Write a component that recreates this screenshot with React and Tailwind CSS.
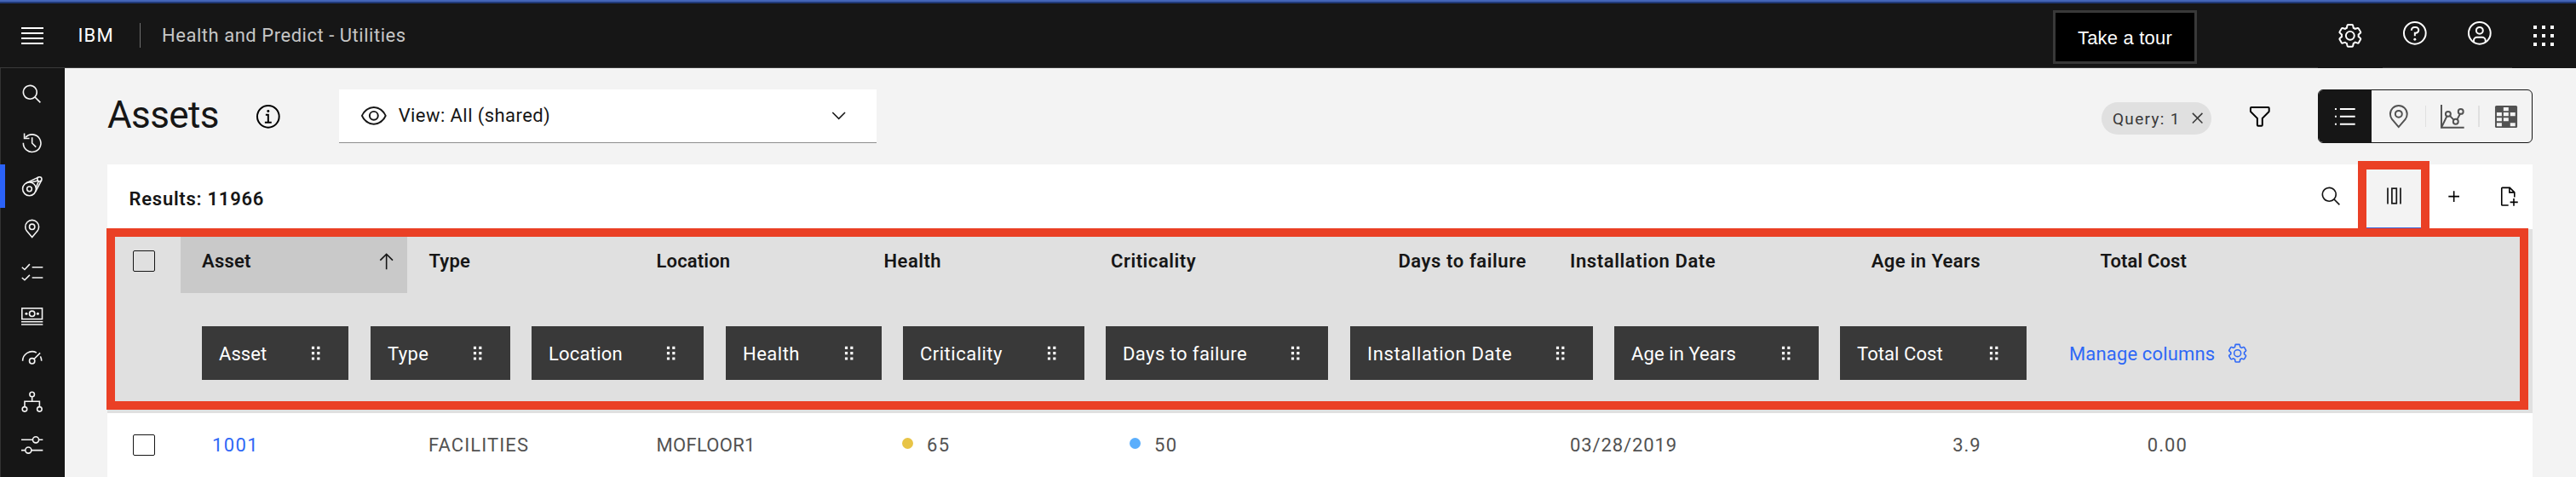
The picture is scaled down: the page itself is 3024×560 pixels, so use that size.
import React from "react";

const GEAR =
  "M27,16.76c0-.25,0-.5,0-.76s0-.51,0-.77l1.92-1.68A2,2,0,0,0,29.3,11L26.94,7a2,2,0,0,0-1.73-1,2,2,0,0,0-.64.1l-2.43.82a11.35,11.35,0,0,0-1.31-.75l-.51-2.52a2,2,0,0,0-2-1.61H13.64a2,2,0,0,0-2,1.61l-.51,2.52a11.48,11.48,0,0,0-1.32.75L7.43,6.06A2,2,0,0,0,6.79,6,2,2,0,0,0,5.06,7L2.7,11a2,2,0,0,0,.41,2.51L5,15.24c0,.25,0,.5,0,.76s0,.51,0,.77L3.11,18.45A2,2,0,0,0,2.7,21L5.06,25a2,2,0,0,0,1.73,1,2,2,0,0,0,.64-.1l2.43-.82a11.35,11.35,0,0,0,1.31.75l.51,2.52a2,2,0,0,0,2,1.61h4.72a2,2,0,0,0,2-1.61l.51-2.52a11.48,11.48,0,0,0,1.32-.75l2.42.82a2,2,0,0,0,.64.1,2,2,0,0,0,1.73-1L29.3,21a2,2,0,0,0-.41-2.51ZM25.21,24l-3.43-1.16a8.86,8.86,0,0,1-2.71,1.57L18.36,28H13.64l-.71-3.55a9.36,9.36,0,0,1-2.7-1.57L6.79,24,4.43,20l2.72-2.4a8.9,8.9,0,0,1,0-3.13L4.43,12,6.79,8l3.43,1.16a8.86,8.86,0,0,1,2.71-1.57L13.64,4h4.72l.71,3.55a9.36,9.36,0,0,1,2.7,1.57L25.21,8,27.57,12l-2.72,2.4a8.9,8.9,0,0,1,0,3.13L27.57,20ZM16,22a6,6,0,1,1,6-6A5.94,5.94,0,0,1,16,22Zm0-10a3.91,3.91,0,0,0-4,4,3.91,3.91,0,0,0,4,4,3.91,3.91,0,0,0,4-4A3.91,3.91,0,0,0,16,12Z";
const SEARCH =
  "M29,27.5859l-7.5521-7.5521a11.0177,11.0177,0,1,0-1.4141,1.4141L27.5859,29ZM4,13a9,9,0,1,1,9,9A9.01,9.01,0,0,1,4,13Z";

/* 32-unit icon frames: small is 25.33px, large is 31.67px */
function Solid({ d, className = "size-[25.33px]", children }) {
  return (
    <svg viewBox="0 0 32 32" fill="currentColor" className={`block shrink-0 ${className}`}>
      {d && <path d={d} />}
      {children}
    </svg>
  );
}
function Line({ className = "size-[25.33px]", children }) {
  return (
    <svg viewBox="0 0 32 32" fill="none" stroke="currentColor" strokeWidth="2" className={`block shrink-0 ${className}`}>
      {children}
    </svg>
  );
}

const Pin = ({ className }) => (
  <Line className={className}>
    <path d="M16 28.4 L8 19 C6.6 17.3 6 15 6 13 A10 10 0 0 1 26 13 C26 15 25.4 17.3 24 19 Z" />
    <circle cx="16" cy="13" r="4" />
  </Line>
);

const sideIcons = [
  <Line key="history">
    <path d="M6 8.3 A13 13 0 1 1 3 16" />
    <path d="M4.5 2 V9.5 H12" />
    <path d="M16 8 V16.4 L21.8 22.2" />
  </Line>,
  <Line key="engine">
    <circle cx="12" cy="20" r="10" />
    <circle cx="12" cy="20" r="3.6" />
    <circle cx="27" cy="5.5" r="3.3" />
    <path d="M7 11.4 L25.2 2.7 M21.2 23.8 L30 7.2 M14 10.2 L24.4 7.8 M21.8 18 L25.6 8.6" />
  </Line>,
  <Pin key="pin" />,
  <Line key="tasks">
    <path d="M16 8.5 H32 M16 24 H32 M1 8.5 L5 12 L12.5 4 M1 24 L5 27.5 L12.5 20" />
  </Line>,
  <Line key="money">
    <rect x="1" y="5" width="30" height="16" />
    <circle cx="16" cy="13" r="4" />
    <circle cx="7.5" cy="13" r="1.9" fill="currentColor" stroke="none" />
    <circle cx="24.5" cy="13" r="1.9" fill="currentColor" stroke="none" />
    <path d="M0 25 H32 M0 29 H32" />
  </Line>,
  <Line key="meter">
    <path d="M2 20 A14 14 0 0 1 22.5 7.6 M28.3 13 A14 14 0 0 1 30 20 M18.6 17.4 L28 8" />
    <circle cx="16" cy="20" r="4" />
  </Line>,
  <Line key="tree">
    <circle cx="16" cy="5" r="3.5" />
    <circle cx="5" cy="27" r="3.5" />
    <circle cx="27" cy="27" r="3.5" />
    <path d="M16 8.5 V15.5 M5 23.5 V15.5 H27 V23.5" />
  </Line>,
  <Line key="sliders">
    <path d="M0 8 H17 M26 8 H32 M0 23.5 H6 M15 23.5 H32" />
    <circle cx="21.5" cy="8" r="4.5" />
    <circle cx="10.5" cy="23.5" r="4.5" />
  </Line>,
];

function Header() {
  return (
    <header className="flex h-20 w-full shrink-0 flex-col bg-[#161616] text-white">
      <div className="h-[2px] bg-[#4465b8]" />
      <div className="h-[2px] bg-[#213a78]" />
      <div className="flex h-[76px] w-full">
        <div className="flex w-[2721px] border-b border-[#393939]">
          <div className="flex w-[76px] justify-center pt-7">
            <svg viewBox="0 0 26 20" className="block h-5 w-[26px]" fill="currentColor">
              <path d="M0 0h26v2H0zM0 6h26v2H0zM0 12h26v2H0zM0 18h26v2H0z" />
            </svg>
          </div>
          <div className="w-[88px] pl-[15.5px] pt-[22px] text-[22px] leading-[31px] tracking-[1.1px]">IBM</div>
          <div className="mt-[23px] h-[29px] w-px bg-[#6f6f6f]" />
          <div className="w-[2245px] pl-[25px] pt-[22px] text-[22px] leading-[31px] tracking-[0.53px] text-[#c6c6c6]">
            Health and Predict - Utilities
          </div>
          <button className="mt-2 flex h-[63px] w-[169px] items-center justify-center border-[3px] border-[#393939] bg-black pt-[2px] font-['Liberation_Sans',sans-serif] text-[22px] leading-6 tracking-[0.2px]">
            Take a tour
          </button>
        </div>
        <div className="flex w-[76px] justify-center pt-[22px]">
          <Solid d={GEAR} className="size-[31.67px]" />
        </div>
        <div className="flex w-[76px] justify-center border-b border-[#393939] pt-[19px]">
          <Line className="size-[31.67px]">
            <circle cx="16" cy="16" r="13" />
            <path fill="currentColor" stroke="none" d="M17,8H15.5A4.49,4.49,0,0,0,11,12.5V13h2v-.5A2.5,2.5,0,0,1,15.5,10H17a2.5,2.5,0,0,1,0,5H15v4.5h2V17a4.5,4.5,0,0,0,0-9Z" />
            <circle cx="16" cy="23.5" r="1.5" fill="currentColor" stroke="none" />
          </Line>
        </div>
        <div className="flex w-[76px] justify-center border-b border-[#393939] pt-[19px]">
          <Line className="size-[31.67px]">
            <circle cx="16" cy="16" r="13" />
            <circle cx="16" cy="13" r="4" />
            <path d="M9 26.5 V25 A4 4 0 0 1 13 21 H19 A4 4 0 0 1 23 25 V26.5" />
          </Line>
        </div>
        <div className="flex w-[75px] justify-center pr-px pt-[22px]">
          <Solid className="size-8" d="M4 4h4v4h-4zM14 4h4v4h-4zM24 4h4v4h-4zM4 14h4v4h-4zM14 14h4v4h-4zM24 14h4v4h-4zM4 24h4v4h-4zM14 24h4v4h-4zM24 24h4v4h-4z" />
        </div>
      </div>
    </header>
  );
}

function Sidebar() {
  return (
    <nav className="flex w-[76px] shrink-0 flex-col border-l border-[#333333] bg-[#161616] text-[#f4f4f4]">
      <div className="flex h-[62.3px] shrink-0 items-center justify-center pr-px">
        <Solid d={SEARCH} />
      </div>
      {sideIcons.map((icon, i) => (
        <div
          key={i}
          className={
            "relative flex h-[50.67px] shrink-0 items-center justify-center pr-px " +
            (i === 1 ? "before:absolute before:-left-px before:top-0 before:h-[51px] before:w-[6px] before:bg-[#2b62f7]" : "")
          }
        >
          {icon}
        </div>
      ))}
    </nav>
  );
}

function TitleBar() {
  return (
    <div className="flex h-[113px] w-full pl-[50px]">
      <h1 className="w-[173px] pt-[25px] text-[44px] leading-[60px] tracking-[-0.6px]">Assets</h1>
      <div className="w-[99px] pt-[41px]">
        <Line className="size-[31.67px] text-black">
          <circle cx="16" cy="16" r="13" />
          <path fill="currentColor" stroke="none" d="M17 22V13H13V15H15V22H12V24H20V22Z" />
          <circle cx="16" cy="9.5" r="1.5" fill="currentColor" stroke="none" />
        </Line>
      </div>
      <div className="mt-[25px] flex h-[63px] w-[631px] items-center border-b border-[#8d8d8d] bg-white pl-[25px] pr-8">
        <Solid
          className="size-[31.67px]"
          d="M30.94,15.66A16.69,16.69,0,0,0,16,5,16.69,16.69,0,0,0,1.06,15.66a1,1,0,0,0,0,.68A16.69,16.69,0,0,0,16,27,16.69,16.69,0,0,0,30.94,16.34,1,1,0,0,0,30.94,15.66ZM16,25c-5.3,0-10.9-3.93-12.93-9C5.1,10.93,10.7,7,16,7s10.9,3.93,12.93,9C26.9,21.07,21.3,25,16,25ZM16,10a6,6,0,1,0,6,6A6,6,0,0,0,16,10Zm0,10a4,4,0,1,1,4-4A4,4,0,0,1,16,20Z"
        />
        <span className="grow pl-[13px] text-[22px] leading-7 tracking-[0.43px]">View: All (shared)</span>
        <Solid d="M16 22L6 12 7.4 10.6 16 19.2 24.6 10.6 26 12Z" />
      </div>
      <div className="ml-[1438px] mt-10 flex h-[38px] w-[129px] items-center justify-between rounded-full bg-[#e0e0e0] pl-[13px] pr-1 text-[#393939]">
        <span className="pt-px text-[19px] leading-6 tracking-[1.3px]">Query: 1</span>
        <Solid d="M24 9.4L22.6 8 16 14.6 9.4 8 8 9.4 14.6 16 8 22.6 9.4 24 16 17.4 22.6 24 24 22.6 17.4 16 24 9.4Z" />
      </div>
      <div className="ml-[41px] w-[84px] pt-[41px] text-black">
        <Solid
          className="size-[31.67px]"
          d="M18,28H14a2,2,0,0,1-2-2V18.41L4.59,11A2,2,0,0,1,4,9.59V6A2,2,0,0,1,6,4H26a2,2,0,0,1,2,2V9.59A2,2,0,0,1,27.41,11L20,18.41V26A2,2,0,0,1,18,28ZM6,6V9.59l8,8V26h4V17.59l8-8V6Z"
        />
      </div>
      <div className="mt-[25px] flex h-[63px] w-[252px] overflow-hidden rounded-md border border-[#161616] text-[#525252]">
        <div className="flex w-[62px] items-center justify-center bg-[#161616] text-white">
          <Solid className="size-[31.67px]" d="M10 6h18v2H10zM10 15h18v2H10zM10 24h18v2H10zM4 6h2v2H4zM4 15h2v2H4zM4 24h2v2H4z" />
        </div>
        <div className="flex w-[63px] items-center justify-center pl-px">
          <Pin className="size-[31.67px]" />
        </div>
        <div className="h-[25px] w-[2px] self-center bg-[#e0e0e0]" />
        <div className="flex w-[61px] items-center justify-center">
          <Line className="size-[31.67px]">
            <path d="M3 2 V29 H30 M3.6 28 L9.6 15.4 M13 15 L18.3 20.6 M21.6 19.6 L25.2 12.8" />
            <circle cx="11" cy="13" r="3" />
            <circle cx="20" cy="22" r="3" />
            <circle cx="26" cy="10" r="3" />
          </Line>
        </div>
        <div className="h-[25px] w-[2px] self-center bg-[#e0e0e0]" />
        <div className="flex w-[61px] items-center justify-center">
          <Solid className="size-[31.67px]">
            <rect x="3" y="3" width="26.4" height="26.4" rx="1.6" />
            <path fill="#f4f4f4" d="M13 5h6v4.4h-6zM5 11.2h6v4.2H5zM13 11.2h6v4.2h-6zM21 11.2h6v4.2h-6zM5 17.4h6v4.2H5zM13 17.4h6v4.2h-6zM5 23.4h6v4.2H5zM21 23.4h6v4.2h-6z" />
          </Solid>
        </div>
      </div>
    </div>
  );
}

function Toolbar() {
  return (
    <div className="flex h-[76px] w-full bg-white">
      <div className="w-[2586px] pl-[25.5px] pt-[25px] text-[22px] font-semibold leading-[31px] tracking-[0.75px]">Results: 11966</div>
      <div className="mr-[14px] flex w-[50px] items-center justify-center">
        <Solid d={SEARCH} />
      </div>
      <div className="flex w-[68px] items-center justify-center border-b-2 border-[#3a62d8] bg-[#f3f3f3] pl-px">
        <svg viewBox="0 0 17 20" className="block h-5 w-[17px]" fill="none" stroke="currentColor" strokeWidth="1.7">
          <path d="M1 0.5V19.5M16 0.5V19.5" />
          <rect x="5.9" y="1.2" width="5.4" height="17.6" />
        </svg>
      </div>
      <div className="flex w-[73px] items-center justify-center pb-px text-black">
        <Solid d="M17 15L17 8 15 8 15 15 8 15 8 17 15 17 15 24 17 24 17 17 24 17 24 15Z" />
      </div>
      <div className="flex w-14 items-center justify-center text-black">
        <Line>
          <path d="M16 29 H7 A1 1 0 0 1 6 28 V4 A1 1 0 0 1 7 3 H18 L25 10 V17 M17.5 3 V10 H25 M24 19 V30 M18.5 24.5 H30" />
        </Line>
      </div>
    </div>
  );
}

const GRID = "grid grid-cols-[86px_266px_267px_267px_266px_267px_267px_266px_267px_267px_361px]";

function Checkbox() {
  return <div className="ml-[30px] h-[25px] w-[26px] rounded-xs border-[1.5px] border-[#161616]" />;
}

const chips = [
  ["Asset", "w-[172px] tracking-[0.07px]"],
  ["Type", "w-[164px] ml-[26px] tracking-[0.4px]"],
  ["Location", "w-[202px] ml-[25px] tracking-[0.22px]"],
  ["Health", "w-[183px] ml-[26px] tracking-[0.5px]"],
  ["Criticality", "w-[213px] ml-[25px] tracking-[0.5px]"],
  ["Days to failure", "w-[261px] ml-[25px] tracking-[0.42px]"],
  ["Installation Date", "w-[285px] ml-[26px] tracking-[0.65px]"],
  ["Age in Years", "w-[240px] ml-[25px] tracking-[0.1px]"],
  ["Total Cost", "w-[219px] ml-[25px] tracking-[0.08px]"],
];

function Table() {
  return (
    <div className="w-full text-[22px] leading-[30px]">
      <div className="h-[216px] bg-[#e0e0e0]">
        <div className={GRID + " h-[75px] items-center font-semibold"}>
          <div className="pb-px">
            <Checkbox />
          </div>
          <div className="flex h-[75px] items-center justify-between bg-[#c9c9c9] pl-[25px] pr-[11.5px] tracking-[0.2px]">
            <span className="pt-px">Asset</span>
            <Solid d="M16 4L6 14 7.41 15.41 15 7.83 15 28 17 28 17 7.83 24.59 15.41 26 14 16 4Z" />
          </div>
          <div className="pl-[25.5px] pt-px tracking-[0.17px]">Type</div>
          <div className="pl-[25.5px] pt-px tracking-[0.16px]">Location</div>
          <div className="pl-[25.5px] pt-px tracking-[0.5px]">Health</div>
          <div className="pl-[26px] pt-px tracking-[0.55px]">Criticality</div>
          <div className="pr-[20px] pt-px text-right tracking-[0.6px]">Days to failure</div>
          <div className="pl-[31px] pt-px tracking-[0.6px]">Installation Date</div>
          <div className="pr-[20px] pt-px text-right tracking-[0.38px]">Age in Years</div>
          <div className="pr-[45px] pt-px text-right tracking-[0.13px]">Total Cost</div>
          <div />
        </div>
        <div className="flex pl-[111px] pt-[39px]">
          {chips.map(([label, cls]) => (
            <div key={label} className={"flex h-[63px] shrink-0 items-center justify-between bg-[#393939] pl-[20px] pr-[25.5px] text-white " + cls}>
              <span className="pt-[3px]">{label}</span>
              <Solid d="M10 6h4v4h-4zM18 6h4v4h-4zM10 14h4v4h-4zM18 14h4v4h-4zM10 22h4v4h-4zM18 22h4v4h-4z" />
            </div>
          ))}
          <div className="flex h-[63px] items-center pl-[50px] text-[#2f68f6]">
            <span className="w-[184.5px] pt-[3px] tracking-[0.15px]">Manage columns</span>
            <Solid d={GEAR} />
          </div>
        </div>
      </div>
      <div className={GRID + " h-[75px] items-center bg-white text-[#525252]"}>
        <Checkbox />
        <div className="pl-[37px] tracking-[1.4px] text-[#2f68f6]">1001</div>
        <div className="pl-[25px] tracking-[1.1px]">FACILITIES</div>
        <div className="pl-[25.5px] tracking-[0.3px]">MOFLOOR1</div>
        <div className="flex items-center pl-[47px] tracking-[1.4px]">
          <span className="mb-[5px] mr-4 size-[13px] rounded-full bg-[#e8c446]" />65
        </div>
        <div className="flex items-center pl-[48px] tracking-[1.4px]">
          <span className="mb-[5px] mr-4 size-[13px] rounded-full bg-[#5aaefc]" />50
        </div>
        <div />
        <div className="pl-[31px] tracking-[0.9px]">03/28/2019</div>
        <div className="pr-[19.5px] text-right tracking-[0.9px]">3.9</div>
        <div className="pr-[44px] text-right tracking-[1.1px]">0.00</div>
        <div />
      </div>
    </div>
  );
}

export default function App() {
  return (
    <div className="relative flex h-[560px] w-[3024px] flex-col overflow-hidden bg-[#f3f3f3] font-['Roboto','Noto_Sans',sans-serif] text-[#161616]">
      <Header />
      <div className="flex h-[480px] w-full">
        <Sidebar />
        <main className="flex w-[2948px] flex-col">
          <TitleBar />
          <div className="ml-[50px] w-[2847px]">
            <Toolbar />
            <Table />
          </div>
        </main>
      </div>
      {/* callout frames drawn over the page */}
      <div className="absolute left-[2768px] top-[189px] h-[89px] w-[84px] border-[10px] border-[#ea4025]" />
      <div className="absolute left-[125px] top-[268px] h-[213px] w-[2843px] border-[10px] border-[#ea4025]" />
    </div>
  );
}
